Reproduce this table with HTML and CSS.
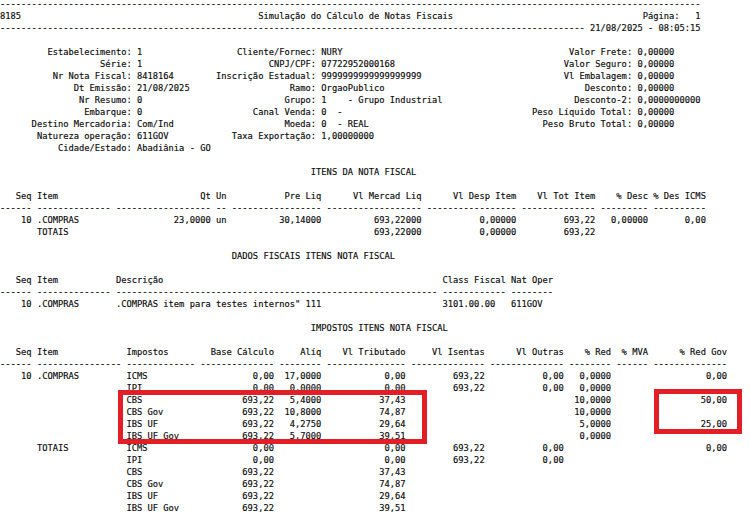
FILE: index.html
```html
<!DOCTYPE html>
<html lang="pt-BR">
<head>
<meta charset="utf-8">
<title>Simulação do Cálculo de Notas Fiscais</title>
<link rel="stylesheet" href="styles.css">
</head>
<body>
<div class="sheet">
<pre class="report">-------------------------------------------------------------------------------------------------------------------------------------
8185                                             Simulação do Cálculo de Notas Fiscais                                    Página:   1
--------------------------------------------------------------------------------------------------------------- 21/08/2025 - 08:05:15

         Estabelecimento: 1                  Cliente/Fornec: NURY                                           Valor Frete: 0,00000
                   Série: 1                        CNPJ/CPF: 07722952000168                                Valor Seguro: 0,00000
          Nr Nota Fiscal: 8418164        Inscrição Estadual: 9999999999999999999                           Vl Embalagem: 0,00000
              Dt Emissão: 21/08/2025                   Ramo: OrgaoPublico                                      Desconto: 0,00000
               Nr Resumo: 0                           Grupo: 1    - Grupo Industrial                         Desconto-2: 0,0000000000
                Embarque: 0                     Canal Venda: 0  -                                    Peso Líquido Total: 0,00000
      Destino Mercadoria: Com/Ind                     Moeda: 0  - REAL                                 Peso Bruto Total: 0,00000
       Natureza operação: 611GOV            Taxa Exportação: 1,00000000
           Cidade/Estado: Abadiânia - GO

                                                           ITENS DA NOTA FISCAL

   Seq Item                           Qt Un           Pre Liq      Vl Mercad Liq      Vl Desp Item    Vl Tot Item    % Desc % Des ICMS
------ -------------- ------------------ -- ----------------- ------------------ ----------------- -------------- --------- ----------
    10 .COMPRAS                  23,0000 un          30,14000          693,22000           0,00000         693,22   0,00000       0,00
       TOTAIS                                                          693,22000           0,00000         693,22

                                            DADOS FISCAIS ITENS NOTA FISCAL

   Seq Item           Descrição                                                     Class Fiscal Nat Oper
------ -------------- ------------------------------------------------------------- ------------ --------
    10 .COMPRAS       .COMPRAS item para testes internos" 111                       3101.00.00   611GOV

                                                           IMPOSTOS ITENS NOTA FISCAL

   Seq Item             Impostos        Base Cálculo     Alíq    Vl Tributado     Vl Isentas      Vl Outras    % Red  % MVA      % Red Gov
------ ---------------- ------------- -------------- -------- --------------- -------------- -------------- -------- ------ --------------
    10 .COMPRAS         ICMS                    0,00  17,0000            0,00         693,22           0,00   0,0000                  0,00
                        IPI                     0,00   0,0000            0,00         693,22           0,00   0,0000
                        CBS                   693,22   5,4000           37,43                                10,0000                 50,00
                        CBS Gov               693,22  10,8000           74,87                                10,0000
                        IBS UF                693,22   4,2750           29,64                                 5,0000                 25,00
                        IBS UF Gov            693,22   5,7000           39,51                                 0,0000
       TOTAIS           ICMS                    0,00                     0,00         693,22           0,00                           0,00
                        IPI                     0,00                     0,00         693,22           0,00
                        CBS                   693,22                    37,43
                        CBS Gov               693,22                    74,87
                        IBS UF                693,22                    29,64
                        IBS UF Gov            693,22                    39,51
</pre>
<div class="mark mark-a"></div>
<div class="mark mark-b"></div>
</div>
</body>
</html>
```

FILE: styles.css
```css
html, body {
  margin: 0;
  padding: 0;
  background: #ffffff;
}

body {
  width: 750px;
  height: 527px;
  overflow: hidden;
}

.sheet {
  position: relative;
  display: flow-root;
}

.report {
  margin: -2px 0 0 0;
  font-family: "DejaVu Sans Mono", "Liberation Mono", monospace;
  font-size: 8.75px;
  line-height: 12px;
  color: #0a0a0a;
  -webkit-text-stroke: 0.15px #0a0a0a;
  white-space: pre;
}

.mark {
  position: absolute;
  border: 5px solid #e31e26;
}

.mark-a {
  left: 118px;
  top: 390px;
  width: 299px;
  height: 44px;
}

.mark-b {
  left: 654px;
  top: 389px;
  width: 78px;
  height: 35px;
}
```
